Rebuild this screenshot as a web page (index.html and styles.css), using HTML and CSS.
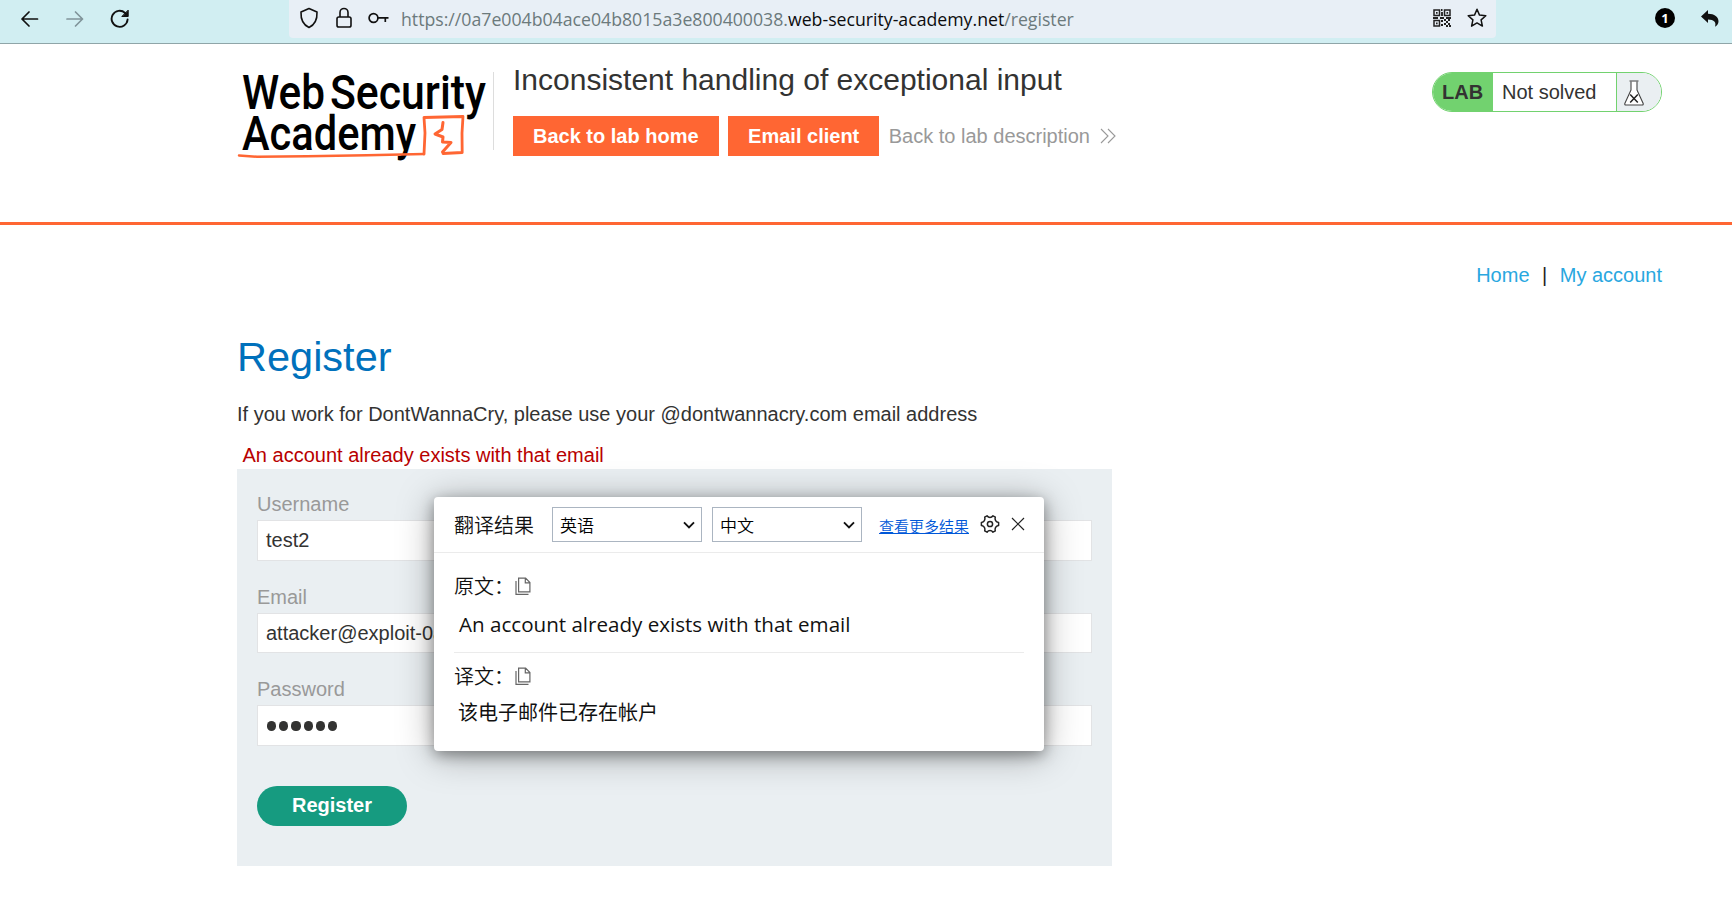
FILE: index.html
```html
<!DOCTYPE html>
<html lang="en">
<head>
<meta charset="utf-8">
<title>Inconsistent handling of exceptional input</title>
<link rel="stylesheet" href="styles.css">
</head>
<body>
<div class="toolbar">
  <div class="nav-buttons">
    <svg width="18" height="18" viewBox="0 0 18 18" fill="none" stroke="#111" stroke-width="1.7" stroke-linecap="round" stroke-linejoin="round"><path d="M16.500 9H1M8 2 1 9l7 7"/></svg>
    <svg width="18" height="18" viewBox="0 0 18 18" fill="none" stroke="#81949a" stroke-width="1.7" stroke-linecap="round" stroke-linejoin="round"><path d="M1 9h15.5M9.500 2l7 7-7 7"/></svg>
    <svg class="reload" width="20" height="20" viewBox="0 0 20 20" fill="none" stroke="#111" stroke-width="1.9" stroke-linecap="round"><path d="M17.600 10.500a8 8 0 1 1-2.500-6.500l1.300 1.400"/><path d="M18.200 1.500v6h-6z" fill="#111" stroke-width="1" stroke-linejoin="round"/></svg>
  </div>
  <div class="address">
    <svg width="20" height="22" viewBox="0 0 20 22" fill="none" stroke="#111" stroke-width="1.6" stroke-linejoin="round"><path d="M10 1.500 18 5c.3 6.500-1.500 12.500-8 15.500C3.500 17.500 1.700 11.500 2 5z"/></svg>
    <svg class="lock" width="18" height="22" viewBox="0 0 18 22" fill="none" stroke="#111" stroke-width="1.600"><rect x="2" y="10" width="14" height="10" rx="1.800"/><path d="M5 10V5.500a4 4 0 0 1 8 0V10"/></svg>
    <svg class="key" width="21" height="14" viewBox="0 0 21 14" fill="none" stroke="#111" stroke-width="1.700"><circle cx="5.500" cy="7" r="4.400"/><path d="M10 6.800h10.500M17.300 6.800v4.200"/></svg>
    <div class="url">https://0a7e004b04ace04b8015a3e800400038.<b>web-security-academy.net</b>/register</div>
    <svg class="qr" width="18" height="18" viewBox="0 0 18 18" fill="none" stroke="#222" stroke-width="1.500"><path d="M1 1h5.500v5.500H1zM11.500 1H17v5.500h-5.500zM1 11.500h5.500V17H1z"/><path d="M3 3.800h1.600M13.500 3.800h1.600M3 14.300h1.600M8 1h1.500M9 3v4M0 9h5M7 9h4M13 9h5M8 12h2M8 16h2M11 11h2M13 13h2M15 11h2M11 15h2M15 15h2M13 17h2M16 17h2" stroke-width="1.800"/></svg>
    <svg width="20" height="20" viewBox="0 0 20 20" fill="none" stroke="#111" stroke-width="1.500" stroke-linejoin="round"><path d="m10 1.300 2.500 5.800 6.300.6-4.700 4.200 1.300 6.200L10 14.900l-5.400 3.200 1.300-6.200L1.200 7.700l6.300-.6z"/></svg>
  </div>
  <div class="extensions">
    <span class="count">1</span>
    <svg width="18" height="17" viewBox="0 0 18 17" fill="#111"><path d="M7 0v3.700c6.500.2 10.500 3 10.500 7.500 0 2.500-1.300 4.500-3.500 5.500 1.500-4.500-.8-7-7-7.200V13L0 6.500z"/></svg>
  </div>
</div>

<header class="lab-header">
  <svg class="logo" width="257" height="96" viewBox="0 0 257 96">
    <g class="logo-text">
      <text x="5" y="45.500" textLength="83" lengthAdjust="spacingAndGlyphs">Web</text>
      <text x="93" y="45.500" textLength="156" lengthAdjust="spacingAndGlyphs">Security</text>
      <text x="5" y="86.500" textLength="174" lengthAdjust="spacingAndGlyphs">Academy</text>
    </g>
    <g fill="none" stroke="#ff6633" stroke-linejoin="round" stroke-linecap="round">
      <path d="M2 92.500 20 93.700 70 93.300 130 92.300 187 91" stroke-width="2.500"/>
      <path d="M187 91 188 70 187 54.500 226 53.500 225 70 225.200 89.500 206 90.500" stroke-width="2.800"/>
      <path d="M206 59.500 205 66.500 198 71 206 74 205.500 79 214 79.500 205.500 89" stroke-width="3"/>
    </g>
  </svg>
  <div class="title-block">
    <h2>Inconsistent handling of exceptional input</h2>
    <div class="actions">
      <a class="button">Back to lab home</a>
      <a class="button email">Email client</a>
      <a class="back">Back to lab description
        <svg width="16" height="16" viewBox="0 0 16 16" fill="none" stroke="#999" stroke-width="1.100"><path d="m1 1 7 7-7 7M8 1l7 7-7 7"/></svg></a>
    </div>
  </div>
  <div class="status">
    <span class="lab">LAB</span><span class="state">Not solved</span>
    <span class="flask"><svg width="20" height="26" viewBox="0 0 20 26" fill="#fff" stroke="#444" stroke-width="1.100" stroke-linejoin="round"><path d="M7 1.500V10L.8 23.500q-.3 1.500 1 1.500h16.400q1.300 0 1-1.500L13 10V1.500"/><path d="M5.500 1h9"/><path d="m6.200 14.500 7.600 8M13.800 14.500l-7.600 8" stroke="#222" stroke-width="1.500"/></svg></span>
  </div>
</header>

<main class="page">
  <nav class="links"><a>Home</a><span>|</span><a>My account</a></nav>
  <h1>Register</h1>
  <p class="hint">If you work for DontWannaCry, please use your @dontwannacry.com email address</p>
  <p class="error">An account already exists with that email</p>
  <form class="form">
    <label>Username</label>
    <div class="field">test2</div>
    <label>Email</label>
    <div class="field">attacker@exploit-0a</div>
    <label>Password</label>
    <div class="field"><span class="dots"><i></i><i></i><i></i><i></i><i></i><i></i></span></div>
    <button type="button" class="submit">Register</button>
  </form>
</main>

<section class="popup" lang="zh-CN">
  <div class="popup-head">
    <span class="popup-title">翻译结果</span>
    <div class="select"><span>英语</span><svg width="12" height="8" viewBox="0 0 12 8" fill="none" stroke="#111" stroke-width="1.900"><path d="m1 1.300 5 5 5-5"/></svg></div>
    <div class="select"><span>中文</span><svg width="12" height="8" viewBox="0 0 12 8" fill="none" stroke="#111" stroke-width="1.900"><path d="m1 1.300 5 5 5-5"/></svg></div>
    <a class="more">查看更多结果</a>
    <svg class="gear" width="20" height="20" viewBox="0 0 20 20" fill="none" stroke="#222" stroke-width="1.500" stroke-linejoin="round"><path d="M7 1.800Q8.200 3.400 10 3.400T13 1.800L15.300 3.100Q14.700 5 15.600 6.600T18.600 8.500V11.500Q16.500 11.800 15.600 13.400T15.300 16.900L13 18.200Q11.800 16.600 10 16.600T7 18.200L4.700 16.900Q5.300 15 4.400 13.400T1.400 11.500V8.500Q3.500 8.200 4.400 6.600T4.700 3.100Z"/><circle cx="10" cy="10" r="2.600"/></svg>
    <svg width="14" height="14" viewBox="0 0 14 14" fill="none" stroke="#222" stroke-width="1.200"><path d="m1 1 12 12M13 1 1 13"/></svg>
  </div>
  <div class="popup-body">
    <div class="caption">原文：<svg width="16" height="19" viewBox="0 0 16 19" fill="none" stroke="#666" stroke-width="1.200"><path d="M3.600 1.100h7l4.300 4.500v9.300H3.600zM10.300 1.100v4.800h4.600M1 4v13.400h12.500"/></svg></div>
    <p class="source">An account already exists with that email</p>
    <div class="caption second">译文：<svg width="16" height="19" viewBox="0 0 16 19" fill="none" stroke="#666" stroke-width="1.200"><path d="M3.600 1.100h7l4.300 4.500v9.300H3.600zM10.300 1.100v4.800h4.600M1 4v13.400h12.500"/></svg></div>
    <p class="result">该电子邮件已存在帐户</p>
  </div>
</section>
</body>
</html>
```
FILE: styles.css
```css
* { box-sizing: border-box; }
body {
  margin: 0;
  height: 905px;
  overflow: hidden;
  background: #fff;
  color: #333332;
  font: 20px/24px "Liberation Sans", Arial, sans-serif;
}
h1, h2, p { margin: 0; font-weight: 400; }
svg { display: block; flex: none; }

.toolbar {
  display: flex;
  height: 44px;
  background: #d1eef2;
  border-bottom: 1px solid #8fa5a8;
}
.nav-buttons {
  display: flex;
  align-items: center;
  gap: 27px;
  width: 289px;
  height: 38px;
  padding-left: 21px;
}
.reload { margin-left: -1px; }
.address {
  display: flex;
  align-items: center;
  width: 1207px;
  height: 38px;
  padding: 0 9px 2px 10px;
  background: #e8eff6;
  border-radius: 0 0 4px 4px;
}
.lock { margin-left: 16px; }
.key { margin: 0 12px 0 15px; }
.url {
  flex: 1;
  padding-top: 1px;
  color: #6c7a7c;
  font: 17.700px/24px "Open Sans", "Noto Sans", sans-serif;
  white-space: nowrap;
}
.url b { color: #0c0c0d; font-weight: 400; }
.qr { margin-right: 16px; }
.extensions {
  display: flex;
  align-items: center;
  gap: 26px;
  height: 36px;
  padding-left: 159px;
}
.count {
  width: 20px;
  height: 20px;
  border-radius: 50%;
  background: #000;
  color: #fff;
  font: 700 13px/20px "Open Sans", sans-serif;
  text-align: center;
}

.lab-header {
  display: flex;
  align-items: flex-start;
  height: 181px;
  padding: 19px 70px 0 237px;
  border-bottom: 3px solid #ff6633;
}
.logo {
  overflow: visible;
  background: linear-gradient(#ddd, #ddd) 256px 9px / 1px 78px no-repeat;
}
.logo-text { fill: #000; font: 500 48px Roboto, sans-serif; }
.title-block { margin-left: 19px; }
.title-block h2 { font-size: 30px; line-height: 34px; }
.actions { display: flex; align-items: center; gap: 9px; margin-top: 19px; }
.button {
  height: 40px;
  padding: 0 20px;
  background: #ff6633;
  color: #fff;
  font-weight: 700;
  line-height: 40px;
}
.email { padding: 0 19.500px 0 20.500px; }
.back { display: flex; align-items: center; gap: 10px; padding-left: 1px; color: #999; }
.status {
  display: flex;
  width: 230px;
  height: 40px;
  margin: 9px 0 0 auto;
  overflow: hidden;
  border: 1px solid #72d26f;
  border-radius: 20px;
  line-height: 39px;
}
.lab { width: 60px; padding-left: 9px; background: #72d26f; font-weight: 700; }
.state { flex: 1; padding-left: 9px; }
.flask {
  width: 45px;
  padding: 7px 0 0 7px;
  background: #eaeff2;
  border-left: 1px solid #72d26f;
}

.page { padding: 38px 70px 0 237px; }
.links { display: flex; justify-content: flex-end; gap: 12.500px; color: #29a7df; }
.links span { color: #222; }
.page h1 { margin-top: 46px; color: #0071bc; font-size: 41.500px; line-height: 48px; }
.hint { margin-top: 21px; }
.error { margin-top: 17px; padding-left: 5.500px; color: #b80000; }
.form {
  display: flex;
  flex-direction: column;
  align-items: stretch;
  width: 875px;
  height: 397px;
  margin-top: 2px;
  padding: 23px 20px 0;
  background: #eaeff2;
}
.form label { color: #999; }
.field {
  height: 40.500px;
  margin: 4px 0 24px;
  padding: 0 8px;
  background: #fff;
  border: 1px solid #e2e3e5;
  line-height: 39px;
}
.dots { display: flex; gap: 3px; height: 39px; align-items: center; padding: 1px 0 0 1px; }
.dots i { width: 9.200px; height: 9.200px; border-radius: 50%; background: #333332; }
.submit {
  width: 150px;
  height: 40px;
  margin-top: 16px;
  padding: 0 0 2px;
  border: 0;
  border-radius: 20px;
  background: #169b80;
  color: #fff;
  font: 700 20px/38px "Liberation Sans", Arial, sans-serif;
}

/* Translation window floating above the form */
.popup {
  position: absolute;
  left: 434px;
  top: 497px;
  width: 610px;
  height: 254px;
  border-radius: 4px;
  background: #fff;
  box-shadow: 0 4px 36px rgba(0, 0, 0, .34), 0 4px 14px rgba(0, 0, 0, .34);
  color: #111;
  font-family: "Noto Sans CJK SC", sans-serif;
  font-weight: 350;
}
.popup-head {
  display: flex;
  align-items: center;
  height: 56px;
  padding: 0 19px 0 20px;
  border-bottom: 1px solid #ebebeb;
}
.popup-title { width: 98px; padding-top: 1px; }
.select {
  display: flex;
  align-items: center;
  justify-content: space-between;
  width: 150px;
  height: 35px;
  margin-right: 10px;
  padding: 0 6px 0 7px;
  border: 1px solid #abb5c1;
  color: #000;
  font-size: 17px;
}
.select span { padding-top: 1px; }
.more {
  margin-left: 7px;
  padding-top: 2px;
  color: #0057d8;
  font-size: 15px;
  text-decoration: underline;
}
.gear { margin: -2px 11px 0 11px; }
.gear + svg { margin-top: -2px; }
.popup-body { padding: 21px 20px 0; }
.caption { display: flex; align-items: center; height: 24px; }
.caption svg { margin-left: 1px; }
.source {
  height: 55px;
  padding: 14px 5px 0;
  border-bottom: 1px solid #ebebeb;
  font: 400 20.580px/24px "Open Sans", "Noto Sans", sans-serif;
}
.second { margin-top: 11px; }
.result { margin-top: 12px; padding-left: 4px; }
```
